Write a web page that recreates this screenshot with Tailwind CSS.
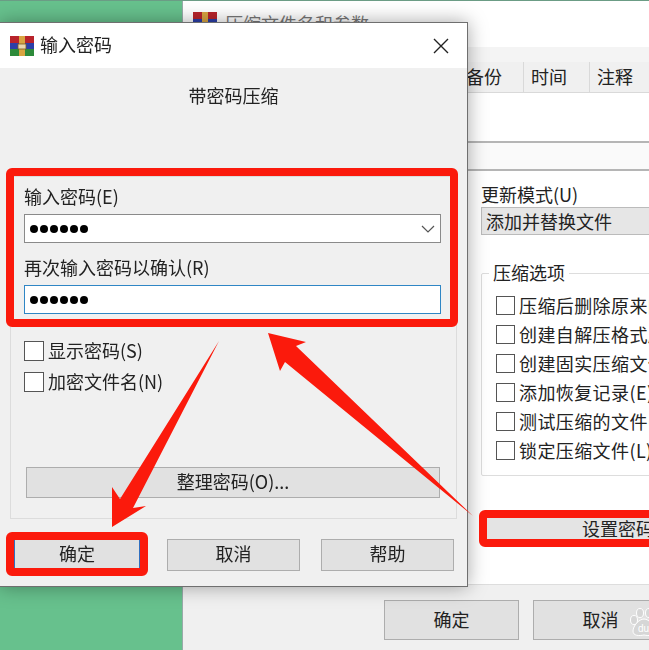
<!DOCTYPE html>
<html lang="zh">
<head>
  <meta charset="utf-8" />
  <title>输入密码</title>
  <script src="https://cdn.jsdelivr.net/npm/@tailwindcss/browser@4"></script>
</head>
<body class="w-[649px] h-[650px] overflow-hidden relative bg-[#67c18d] border-t border-[#6b9c85] blur-[0.4px] font-['Noto_Sans_CJK_SC','Liberation_Sans',sans-serif] text-[18px] leading-[22px] text-[#222]">

  <!-- back window -->
  <div class="absolute left-[182px] top-0 w-[600px] h-[650px] bg-white border-l border-[#9aa] flex flex-col">
    <div class="h-[46px] flex items-start pl-[10px] pt-[11px] gap-[8px] text-[#777] shrink-0">
      <svg class="w-[24px] h-[20px] shrink-0" viewBox="0 0 24 20">
        <rect width="24" height="7" fill="#b8232b"/><rect y="7" width="24" height="6" fill="#2b3fa8"/><rect y="13" width="24" height="7" fill="#2d8a3a"/><rect x="9" width="6" height="20" fill="#d9a441"/>
      </svg>
      <span>压缩文件名和参数</span>
    </div>
    <div class="h-[46px] bg-[#f4f4f4] pt-[15px] pl-[270px] flex shrink-0 border-b border-[#d9d9d9]">
      <div class="w-[71px] h-[30px] pl-[13px] pb-[2px] flex items-center bg-[#f0f0f0] border-r border-[#d9d9d9]">备份</div>
      <div class="w-[66px] h-[30px] pl-[7px] pb-[2px] flex items-center bg-[#f0f0f0] border-r border-[#d9d9d9]">时间</div>
      <div class="w-[66px] h-[30px] pl-[7px] pb-[2px] flex items-center bg-[#f0f0f0] border-r border-[#d9d9d9]">注释</div>
    </div>
    <div class="h-[50px] bg-white border-b-2 border-[#b5b5b5] shrink-0"></div>
    <div class="h-[28px] bg-[#fafafa] border-b-2 border-[#b5b5b5] shrink-0"></div>
    <div class="flex-1 pl-[298px] pt-[12px]">
      <div class="h-[22px]">更新模式(U)</div>
      <div class="mt-[2px] h-[28px] bg-[#e6e6e6] border border-[#bbb] pl-[4px] flex items-center">添加并替换文件</div>
      <div class="relative mt-[38px] h-[203px] border border-[#ddd] rounded-[2px] pl-[14px] pt-[22px] flex flex-col gap-[10px] tracking-[0.4px]">
        <span class="absolute left-[7px] top-[-13px] bg-white px-[4px] tracking-normal">压缩选项</span>
        <label class="flex items-center gap-[4px] h-[19px]"><span class="w-[19px] h-[19px] border border-[#555] bg-white shrink-0"></span><span class="mb-[2px]">压缩后删除原来的文件(D)</span></label>
        <label class="flex items-center gap-[4px] h-[19px]"><span class="w-[19px] h-[19px] border border-[#555] bg-white shrink-0"></span><span class="mb-[2px]">创建自解压格式压缩文件(X)</span></label>
        <label class="flex items-center gap-[4px] h-[19px]"><span class="w-[19px] h-[19px] border border-[#555] bg-white shrink-0"></span><span class="mb-[2px]">创建固实压缩文件(S)</span></label>
        <label class="flex items-center gap-[4px] h-[19px]"><span class="w-[19px] h-[19px] border border-[#555] bg-white shrink-0"></span><span class="mb-[2px]">添加恢复记录(E)</span></label>
        <label class="flex items-center gap-[4px] h-[19px]"><span class="w-[19px] h-[19px] border border-[#555] bg-white shrink-0"></span><span class="mb-[2px]">测试压缩的文件(T)</span></label>
        <label class="flex items-center gap-[4px] h-[19px]"><span class="w-[19px] h-[19px] border border-[#555] bg-white shrink-0"></span><span class="mb-[2px]">锁定压缩文件(L)</span></label>
      </div>
      <div class="mt-[42px] ml-[5px] h-[23px] bg-[#e4e4e4] pl-[96px] pb-[3px] flex items-center">设置密码(P)...</div>
    </div>
    <div class="h-[67px] bg-[#f0f0f0] border-t border-[#ddd] pt-[15px] pl-[201px] flex gap-[14px] shrink-0">
      <div class="w-[135px] h-[40px] pb-[2px] bg-[#e1e1e1] border border-[#adadad] flex items-center justify-center">确定</div>
      <div class="w-[135px] h-[40px] pb-[2px] bg-[#e1e1e1] border border-[#adadad] flex items-center justify-center">取消</div>
    </div>
  </div>

  <!-- watermark -->
  <svg class="absolute left-[629px] top-[607px] w-[30px] h-[30px]" viewBox="0 0 30 30">
    <g fill="#d6d6d6" stroke="#fff" stroke-width="1">
      <ellipse cx="5" cy="12" rx="3.5" ry="4.5"/><ellipse cx="11" cy="5" rx="3.5" ry="4.5"/><ellipse cx="20" cy="5" rx="3.5" ry="4.5"/><ellipse cx="26" cy="12" rx="3.5" ry="4.5"/>
      <path d="M15 11c5 0 11 7 11 12 0 5-6 5-11 4-5 1-11 1-11-4 0-5 6-12 11-12z"/>
    </g>
    <text x="9" y="24" font-size="10" fill="#fff" font-family="Liberation Sans">du</text>
  </svg>

  <!-- password dialog -->
  <div class="absolute left-0 top-[21px] w-[468px] h-[565px] bg-[#f0f0f0] border border-l-0 border-[#6f6f6f] shadow-[0_0_18px_rgba(0,0,0,0.35)] flex flex-col">
    <div class="h-[45px] bg-white flex items-center pl-[10px] shrink-0">
      <svg class="w-[24px] h-[20px] shrink-0" viewBox="0 0 24 20">
        <rect width="24" height="7" fill="#b8232b"/><rect y="7" width="24" height="6" fill="#2b3fa8"/><rect y="13" width="24" height="7" fill="#2d8a3a"/>
        <rect x="9" width="6" height="20" fill="#d9a441"/><rect x="8" y="8" width="8" height="5" fill="#e9d7b0" stroke="#7a5a20" stroke-width="0.8"/>
      </svg>
      <span class="ml-[6px] mb-[4px]">输入密码</span>
      <svg class="ml-auto mr-[18px] w-[16px] h-[16px]" viewBox="0 0 16 16" fill="none" stroke="#222" stroke-width="1.4"><path d="M1 1l14 14M15 1L1 15"/></svg>
    </div>
    <div class="mt-[15px] mb-[1px] h-[24px] text-center leading-[24px]">带密码压缩</div>
    <div class="mt-[68px] ml-[10px] w-[447px] h-[343px] border border-[#dcdcdc] pl-[13px] pr-[15px] pt-[9px] flex flex-col">
      <div class="h-[22px] leading-[20px]">输入密码(E)</div>
      <div class="mt-[6px] h-[29px] bg-white border border-[#8a8a8a] pl-[5px] flex items-center gap-[2px]">
        <i class="w-[8px] h-[8px] rounded-full bg-black"></i><i class="w-[8px] h-[8px] rounded-full bg-black"></i><i class="w-[8px] h-[8px] rounded-full bg-black"></i><i class="w-[8px] h-[8px] rounded-full bg-black"></i><i class="w-[8px] h-[8px] rounded-full bg-black"></i><i class="w-[8px] h-[8px] rounded-full bg-black"></i>
        <svg class="ml-auto mr-[5px] w-[14px] h-[8px]" viewBox="0 0 14 8" fill="none" stroke="#555" stroke-width="1.2"><path d="M1 1l6 6 6-6"/></svg>
      </div>
      <div class="mt-[14px] h-[22px] leading-[20px]">再次输入密码以确认(R)</div>
      <div class="mt-[6px] h-[29px] bg-white border border-[#2f86c5] pl-[5px] flex items-center gap-[2px]">
        <i class="w-[8px] h-[8px] rounded-full bg-black"></i><i class="w-[8px] h-[8px] rounded-full bg-black"></i><i class="w-[8px] h-[8px] rounded-full bg-black"></i><i class="w-[8px] h-[8px] rounded-full bg-black"></i><i class="w-[8px] h-[8px] rounded-full bg-black"></i><i class="w-[8px] h-[8px] rounded-full bg-black"></i>
      </div>
      <label class="mt-[27px] h-[20px] flex items-center gap-[4px]"><span class="w-[20px] h-[20px] border border-[#555] bg-white shrink-0"></span><span class="mb-[2px]">显示密码(S)</span></label>
      <label class="mt-[11px] h-[20px] flex items-center gap-[4px]"><span class="w-[20px] h-[20px] border border-[#555] bg-white shrink-0"></span><span class="mb-[2px]">加密文件名(N)</span></label>
      <div class="mt-[75px] ml-[2px] mr-[1px] h-[31px] pb-[4px] bg-[#e1e1e1] border border-[#adadad] flex items-center justify-center">整理密码(O)...</div>
    </div>
    <div class="mt-[20px] pl-[14px] flex">
      <div class="w-[126px] h-[31px] pb-[4px] bg-[#e1e1e1] border border-[#2f6fc0] flex items-center justify-center">确定</div>
      <div class="ml-[27px] w-[133px] h-[32px] pb-[4px] bg-[#e1e1e1] border border-[#adadad] flex items-center justify-center">取消</div>
      <div class="ml-[21px] w-[133px] h-[32px] pb-[4px] bg-[#e1e1e1] border border-[#adadad] flex items-center justify-center">帮助</div>
    </div>
  </div>

  <!-- red annotations -->
  <svg class="absolute left-0 top-[-1px] w-[649px] h-[650px]" viewBox="0 0 649 650" fill="none">
    <g stroke="#fb1a0c" stroke-width="8" stroke-linejoin="round">
      <rect x="10" y="172" width="444" height="151" rx="2"/>
      <rect x="10" y="536" width="134" height="36" rx="2"/>
      <rect x="483" y="514" width="200" height="29" rx="2"/>
    </g>
    <polygon fill="#fb1a0c" points="219,341 133,508 146,506 112,527 112,487 120,499"/>
    <polygon fill="#fb1a0c" points="268,333 306,342 296,346 473,516 285,362 280,371"/>
  </svg>
</body>
</html>
